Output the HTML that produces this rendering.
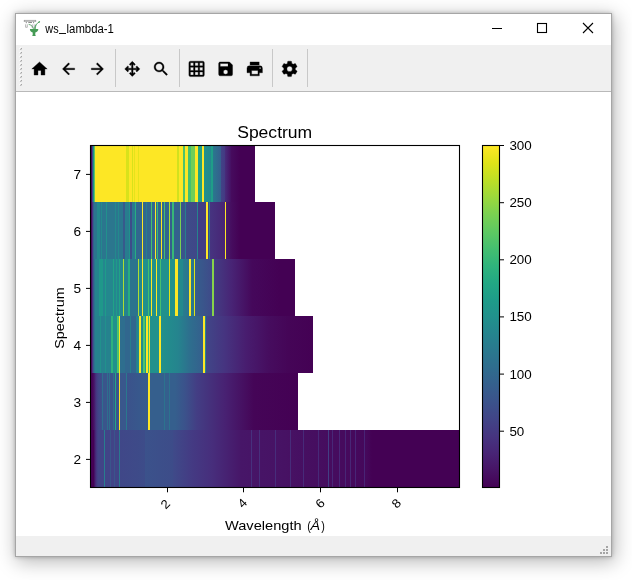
<!DOCTYPE html>
<html><head><meta charset="utf-8"><title>ws_lambda-1</title>
<style>
html,body{margin:0;padding:0;background:#fff;}
body{width:632px;height:580px;position:relative;overflow:hidden;font-family:"Liberation Sans",sans-serif;}
.win{position:absolute;left:15px;top:13px;width:597px;height:544px;box-sizing:border-box;border:1px solid #a6a6a6;background:#fff;
 box-shadow:0 0 4px rgba(0,0,0,.25),2px 4px 18px 1px rgba(0,0,0,.28);}
.tb{position:absolute;left:16px;top:14px;width:595px;height:31px;background:#fff;}
.tool{position:absolute;left:16px;top:45px;width:595px;height:46px;background:#f0f0f0;border-bottom:1px solid #b9b9b9;}
.canvas{position:absolute;left:16px;top:92px;width:595px;height:444px;background:#fff;}
.status{position:absolute;left:16px;top:536px;width:595px;height:20px;background:#f0f0f0;}
.hr{position:absolute;left:74.0px;width:370.0px;height:57.0px;background-repeat:no-repeat;}
.cb{position:absolute;left:466.5px;top:53.5px;width:17px;height:342px;background:linear-gradient(180deg,#fde725 0.0%,#dfe318 5.0%,#bddf26 10.0%,#9bd93c 15.0%,#7ad151 20.0%,#5ec962 25.0%,#44bf70 30.0%,#2fb47c 35.0%,#22a884 40.0%,#1e9c89 45.0%,#21918c 50.0%,#25848e 55.0%,#2a788e 60.0%,#2f6c8e 65.0%,#355f8d 70.0%,#3b528b 75.0%,#414487 80.0%,#463480 85.0%,#482475 90.0%,#471365 95.0%,#440154 100.0%);}
svg{position:absolute;left:0;top:0;will-change:transform;}
svg text{font-family:"Liberation Sans",sans-serif;fill:#000;}
</style></head><body>
<div class="win"></div>
<div class="tb"></div>
<div class="tool"></div>
<div class="canvas">
<div class="hr" style="top:53.0px;background:linear-gradient(90deg,#440154 0.5px,#460c5e 1.5px,#3b528b 2.5px,#21918c 3.5px,#5ec962 4.5px,#fde725 5.2px,#fde725 5.2px,#fde725 36.0px,#d8e21b 36.0px,#d8e21b 39.5px,#fde725 39.5px,#fde725 42.0px,#d8e21b 42.0px,#d8e21b 43.0px,#fde725 43.0px,#fde725 44.0px,#e5e41b 44.0px,#e5e41b 44.8px,#fde725 44.8px,#fde725 48.3px,#e5e41b 48.3px,#e5e41b 49.1px,#fde725 49.1px,#fde725 87.0px,#d1e11e 87.0px,#d1e11e 88.6px,#fde725 88.6px,#fde725 92.9px,#4ec36a 92.9px,#4ec36a 94.9px,#fde725 94.9px,#fde725 98.0px,#44bf70 98.0px,#44bf70 100.8px,#6fce58 100.8px,#6fce58 104.8px,#fde725 104.8px,#fde725 108.0px,#22a884 108.0px,#1f9e88 111.9px,#fde725 111.9px,#fde725 113.9px,#21918c 113.9px,#23898d 121.0px,#1f9e88 121.0px,#1f9e88 123.0px,#2a788e 123.0px,#355f8d 130.9px,#414487 130.9px,#443a83 134.8px,#472e7c 134.8px,#460f62 141.0px,#460c5e 141.0px,#440154 150.0px,#440154 150.0px,#440154 165.5px,#fff 165.5px)"></div>
<div class="hr" style="top:110.0px;background:linear-gradient(90deg,#440154 0.5px,#460c5e 1.5px,#463480 2.5px,#355f8d 3.5px,#2c738e 4.5px,#2b768e 4.5px,#2b768e 7.5px,#23898d 7.5px,#23898d 10.0px,#2b768e 10.0px,#2b768e 11.0px,#23898d 11.0px,#23898d 12.0px,#2b768e 12.0px,#2b768e 16.0px,#21918c 16.0px,#21918c 17.0px,#2b768e 17.0px,#2b768e 25.3px,#23898d 25.3px,#23898d 26.2px,#2b768e 26.2px,#2b768e 28.3px,#23898d 28.3px,#23898d 29.5px,#2b768e 29.5px,#2b768e 33.0px,#375a8c 33.0px,#375a8c 34.8px,#287d8e 34.8px,#287d8e 39.0px,#21918c 39.0px,#21918c 39.6px,#3d4c89 39.6px,#3d4c89 42.0px,#2a788e 42.0px,#2a788e 45.3px,#27ad81 45.3px,#27ad81 46.1px,#31678e 46.1px,#31678e 52.0px,#fde725 52.0px,#fde725 53.0px,#31678e 53.0px,#31678e 56.0px,#287d8e 56.0px,#287d8e 57.0px,#31678e 57.0px,#31678e 61.1px,#44bf70 61.1px,#44bf70 62.1px,#31678e 62.1px,#31678e 65.2px,#fde725 65.2px,#fde725 66.2px,#2f6c8e 66.2px,#2f6c8e 67.0px,#37b877 67.0px,#37b877 68.0px,#31678e 68.0px,#31678e 70.7px,#fde725 70.7px,#fde725 71.7px,#31678e 71.7px,#31678e 73.7px,#44bf70 73.7px,#44bf70 75.2px,#31678e 75.2px,#31678e 79.0px,#afdd2f 79.0px,#afdd2f 80.0px,#355f8d 80.0px,#355f8d 82.0px,#37b877 82.0px,#37b877 84.0px,#34628d 84.0px,#34628d 90.0px,#7ad151 90.0px,#7ad151 91.0px,#3a558b 91.0px,#3a558b 94.7px,#287d8e 94.7px,#287d8e 96.0px,#3d4c89 96.0px,#404788 106.7px,#25848e 106.7px,#25848e 107.9px,#433e84 107.9px,#433e84 115.8px,#fde725 115.8px,#fde725 118.0px,#414487 118.0px,#414487 119.0px,#287d8e 119.0px,#287d8e 120.2px,#463480 120.2px,#482475 134.8px,#fde725 134.8px,#fde725 136.2px,#471a6b 136.2px,#460c5e 142.0px,#460c5e 142.0px,#440154 150.0px,#440154 150.0px,#440154 185.0px,#fff 185.0px)"></div>
<div class="hr" style="top:167.0px;background:linear-gradient(90deg,#440154 0.5px,#460c5e 1.5px,#463480 2.5px,#375a8c 3.5px,#2c738e 4.5px,#277f8e 5.5px,#25848e 5.5px,#25848e 9.5px,#1f988a 9.5px,#1f988a 12.7px,#24878e 12.7px,#24878e 15.0px,#1e9c89 15.0px,#1e9c89 16.0px,#24878e 16.0px,#24878e 23.0px,#20a386 23.0px,#20a386 24.5px,#24878e 24.5px,#24878e 26.5px,#1f9a8a 26.5px,#1f9a8a 27.5px,#24878e 27.5px,#24878e 29.3px,#20a386 29.3px,#20a386 30.2px,#24878e 30.2px,#24878e 33.1px,#afdd2f 33.1px,#afdd2f 34.0px,#25848e 34.0px,#25848e 38.0px,#27ad81 38.0px,#27ad81 39.6px,#2c738e 39.6px,#2c738e 47.9px,#afdd2f 47.9px,#afdd2f 49.0px,#24878e 49.0px,#24878e 52.0px,#fde725 52.0px,#fde725 53.0px,#21918c 53.0px,#21918c 57.9px,#44bf70 57.9px,#44bf70 58.9px,#21918c 58.9px,#21918c 61.0px,#fde725 61.0px,#fde725 62.0px,#21918c 62.0px,#21918c 65.9px,#fde725 65.9px,#fde725 67.1px,#21918c 67.1px,#21918c 70.2px,#44bf70 70.2px,#44bf70 71.4px,#21918c 71.4px,#21918c 79.0px,#dfe318 79.0px,#dfe318 80.0px,#21918c 80.0px,#21918c 84.8px,#fde725 84.8px,#fde725 88.1px,#23898d 88.1px,#23898d 93.0px,#287d8e 93.0px,#2c738e 99.0px,#fde725 99.0px,#fde725 101.2px,#2a788e 101.2px,#2a788e 103.8px,#dfe318 103.8px,#dfe318 105.1px,#355f8d 105.1px,#3f4a89 122.0px,#87d449 122.0px,#87d449 123.7px,#433e84 123.7px,#482475 141.7px,#482475 141.7px,#45085b 162.0px,#45085b 162.0px,#440154 190.0px,#440154 190.0px,#440154 205.5px,#fff 205.5px)"></div>
<div class="hr" style="top:224.0px;background:linear-gradient(90deg,#440154 0.5px,#460c5e 1.5px,#463480 2.5px,#375a8c 3.5px,#2c738e 4.5px,#277f8e 5.5px,#26828e 5.5px,#26828e 10.0px,#21918c 10.0px,#21918c 11.5px,#26828e 11.5px,#26828e 15.0px,#21918c 15.0px,#21918c 16.0px,#26828e 16.0px,#26828e 20.6px,#21918c 20.6px,#21918c 21.4px,#2cb27e 21.4px,#2cb27e 22.8px,#21918c 22.8px,#21918c 26.9px,#4ec36a 26.9px,#4ec36a 28.6px,#fde725 28.6px,#fde725 30.0px,#2e6e8e 30.0px,#2e6e8e 35.0px,#31678e 35.0px,#31678e 39.6px,#287d8e 39.6px,#287d8e 41.0px,#31678e 41.0px,#31678e 46.0px,#287d8e 46.0px,#238c8d 49.0px,#fde725 49.0px,#fde725 50.8px,#238c8d 50.8px,#238c8d 52.8px,#4ec36a 52.8px,#4ec36a 54.7px,#1e9c89 54.7px,#1e9c89 55.9px,#fde725 55.9px,#fde725 57.9px,#44bf70 57.9px,#44bf70 58.9px,#fde725 58.9px,#fde725 60.1px,#21918c 60.1px,#21918c 68.6px,#27ad81 68.6px,#27ad81 69.0px,#fde725 69.0px,#fde725 70.7px,#21918c 70.7px,#25848e 88.0px,#25848e 88.0px,#2e6e8e 100.0px,#2e6e8e 100.0px,#355f8d 113.0px,#fde725 113.0px,#fde725 115.0px,#25848e 115.0px,#25848e 115.8px,#404788 115.8px,#463480 134.6px,#463480 134.6px,#481d6f 156.0px,#481d6f 156.0px,#460c5e 179.7px,#460c5e 179.7px,#450557 198.7px,#450557 198.7px,#440154 223.0px,#fff 223.0px)"></div>
<div class="hr" style="top:281.0px;background:linear-gradient(90deg,#440154 0.5px,#440154 2.0px,#471365 4.0px,#463480 6.0px,#414487 8.0px,#3b528b 12.4px,#2e6e8e 12.4px,#2e6e8e 13.2px,#3a558b 13.2px,#3a558b 17.2px,#2e6e8e 17.2px,#2e6e8e 18.0px,#3a558b 18.0px,#3a558b 19.2px,#2e6e8e 19.2px,#2e6e8e 20.0px,#3a558b 20.0px,#3a558b 23.3px,#2e6e8e 23.3px,#2e6e8e 24.1px,#3a558b 24.1px,#3a558b 25.0px,#22a884 25.0px,#22a884 26.1px,#3a558b 26.1px,#3a558b 28.9px,#fde725 28.9px,#fde725 30.0px,#39578c 30.0px,#39578c 36.0px,#2a788e 36.0px,#2a788e 36.8px,#3b528b 36.8px,#365c8d 57.9px,#fde725 57.9px,#fde725 60.1px,#355f8d 60.1px,#355f8d 66.7px,#2c738e 66.7px,#2c738e 67.5px,#355f8d 67.5px,#355f8d 74.2px,#2c738e 74.2px,#2c738e 75.0px,#355f8d 75.0px,#355f8d 78.9px,#2c738e 78.9px,#2c738e 79.7px,#355f8d 79.7px,#355f8d 85.0px,#355f8d 85.0px,#3b528b 95.0px,#3b528b 95.0px,#433e84 106.6px,#433e84 106.6px,#482172 135.4px,#482172 135.4px,#450557 164.0px,#450557 164.0px,#440154 208.0px,#fff 208.0px)"></div>
<div class="hr" style="top:338.0px;background:linear-gradient(90deg,#440154 0.5px,#440154 3.5px,#46317e 6.0px,#414487 8.0px,#414487 8.0px,#414487 13.9px,#287d8e 13.9px,#287d8e 15.0px,#414487 15.0px,#414487 20.0px,#3a558b 20.0px,#3a558b 21.0px,#414487 21.0px,#414487 24.0px,#3a558b 24.0px,#3a558b 25.0px,#414487 25.0px,#414487 28.9px,#2a788e 28.9px,#2a788e 30.0px,#404788 30.0px,#3d4c89 55.0px,#3b528b 55.0px,#3d4c89 83.4px,#3f4a89 83.4px,#443a83 102.4px,#443a83 102.4px,#472e7c 122.0px,#472e7c 122.0px,#471668 151.0px,#471668 151.0px,#471567 161.5px,#47307d 161.5px,#47307d 162.5px,#471567 162.5px,#471466 169.5px,#472f7c 169.5px,#472f7c 170.5px,#471466 170.5px,#471365 184.9px,#472d7b 184.9px,#472d7b 185.9px,#471365 185.9px,#471163 200.5px,#472c7a 200.5px,#472c7a 201.5px,#471163 201.5px,#460f62 213.5px,#472a79 213.5px,#472a79 214.5px,#460f61 214.5px,#460e60 228.1px,#472978 228.1px,#472978 229.1px,#460e60 229.1px,#460d5f 237.8px,#433e84 237.8px,#433e84 239.4px,#460c5f 239.4px,#460c5e 242.5px,#482777 242.5px,#482777 243.5px,#460c5e 243.5px,#460b5e 249.2px,#482777 249.2px,#482777 250.2px,#460b5e 250.2px,#460b5d 255.5px,#482676 255.5px,#482676 256.5px,#460a5d 256.5px,#460a5d 260.3px,#482676 260.3px,#482676 261.3px,#450a5c 261.3px,#45095c 265.5px,#482576 265.5px,#482576 266.5px,#45095c 266.5px,#45085b 274.5px,#482475 274.5px,#482475 275.5px,#45085b 275.5px,#45085b 276.5px,#45085b 276.5px,#440154 282.0px,#440154 282.0px,#440154 369.5px,#fff 369.5px)"></div>
<div class="cb"></div>
</div>
<div class="status"></div>
<svg width="632" height="580" viewBox="0 0 632 580">
<!-- title bar -->
<g id="appicon">
<path d="M24 20.400h12M24.300 21.300h11.400M24.300 20v2M35.700 20v2" stroke="#909090" stroke-width=".7" fill="none"/>
<path d="M28.300 22.500h3.700M26.300 21.800v1.400M33.600 21.800v1.400" stroke="#707070" stroke-width=".8" fill="none"/>
<path d="M25.600 24.300v3h1.700v-3" stroke="#9a9a9a" stroke-width=".7" fill="none"/>
<path d="M32.300 24.400v3.600M34.200 24.400v3.600" stroke="#9a8fa0" stroke-width=".7" fill="none"/>
<path d="M34.500 29.200c.2-3.200 1.700-5.800 4.900-7.300M33.500 29.200c-.3-2.300-1.700-4.100-4.500-4.800M35.300 29.200c0-2 .3-3 .8-4.400" stroke="#459b55" stroke-width=".8" fill="none" stroke-linecap="round"/>
<ellipse cx="39.100" cy="22" rx="1.100" ry=".7" transform="rotate(-30 39.100 22)" fill="#459b55"/>
<path d="M29.900 29h8.400c.1 2-1.300 3.200-3 3.400v2.800l.8.700h-4.200l.8-.7v-2.800c-1.700-.2-2.900-1.400-2.800-3.400z" fill="#459b55"/>
</g>
<text x="45.300" y="32.500" font-size="12" textLength="13.300" lengthAdjust="spacingAndGlyphs">ws</text><rect x="59" y="33" width="7" height="1" fill="#111"/><text x="66.600" y="32.500" font-size="12" textLength="47.300" lengthAdjust="spacingAndGlyphs">lambda-1</text>
<rect x="492" y="28" width="10" height="1" fill="#000"/>
<rect x="537.500" y="23.500" width="9" height="9" fill="none" stroke="#000" stroke-width="1.1"/>
<path d="M583 23l10 10M593 23l-10 10" stroke="#000" stroke-width="1.100" fill="none"/>
<!-- toolbar -->
<rect x="21" y="48" width="1" height="1" fill="#a6a6a6"/><rect x="20" y="49" width="1" height="1" fill="#bcbcbc"/><rect x="21" y="49" width="1" height="1" fill="#d6d6d6"/><rect x="20" y="48" width="1" height="1" fill="#e2e2e2"/><rect x="19" y="48" width="1" height="1" fill="#fafafa"/><rect x="20" y="47" width="1" height="1" fill="#fafafa"/><rect x="21" y="52" width="1" height="1" fill="#a6a6a6"/><rect x="20" y="53" width="1" height="1" fill="#bcbcbc"/><rect x="21" y="53" width="1" height="1" fill="#d6d6d6"/><rect x="20" y="52" width="1" height="1" fill="#e2e2e2"/><rect x="19" y="52" width="1" height="1" fill="#fafafa"/><rect x="20" y="51" width="1" height="1" fill="#fafafa"/><rect x="21" y="56" width="1" height="1" fill="#a6a6a6"/><rect x="20" y="57" width="1" height="1" fill="#bcbcbc"/><rect x="21" y="57" width="1" height="1" fill="#d6d6d6"/><rect x="20" y="56" width="1" height="1" fill="#e2e2e2"/><rect x="19" y="56" width="1" height="1" fill="#fafafa"/><rect x="20" y="55" width="1" height="1" fill="#fafafa"/><rect x="21" y="60" width="1" height="1" fill="#a6a6a6"/><rect x="20" y="61" width="1" height="1" fill="#bcbcbc"/><rect x="21" y="61" width="1" height="1" fill="#d6d6d6"/><rect x="20" y="60" width="1" height="1" fill="#e2e2e2"/><rect x="19" y="60" width="1" height="1" fill="#fafafa"/><rect x="20" y="59" width="1" height="1" fill="#fafafa"/><rect x="21" y="64" width="1" height="1" fill="#a6a6a6"/><rect x="20" y="65" width="1" height="1" fill="#bcbcbc"/><rect x="21" y="65" width="1" height="1" fill="#d6d6d6"/><rect x="20" y="64" width="1" height="1" fill="#e2e2e2"/><rect x="19" y="64" width="1" height="1" fill="#fafafa"/><rect x="20" y="63" width="1" height="1" fill="#fafafa"/><rect x="21" y="68" width="1" height="1" fill="#a6a6a6"/><rect x="20" y="69" width="1" height="1" fill="#bcbcbc"/><rect x="21" y="69" width="1" height="1" fill="#d6d6d6"/><rect x="20" y="68" width="1" height="1" fill="#e2e2e2"/><rect x="19" y="68" width="1" height="1" fill="#fafafa"/><rect x="20" y="67" width="1" height="1" fill="#fafafa"/><rect x="21" y="72" width="1" height="1" fill="#a6a6a6"/><rect x="20" y="73" width="1" height="1" fill="#bcbcbc"/><rect x="21" y="73" width="1" height="1" fill="#d6d6d6"/><rect x="20" y="72" width="1" height="1" fill="#e2e2e2"/><rect x="19" y="72" width="1" height="1" fill="#fafafa"/><rect x="20" y="71" width="1" height="1" fill="#fafafa"/><rect x="21" y="76" width="1" height="1" fill="#a6a6a6"/><rect x="20" y="77" width="1" height="1" fill="#bcbcbc"/><rect x="21" y="77" width="1" height="1" fill="#d6d6d6"/><rect x="20" y="76" width="1" height="1" fill="#e2e2e2"/><rect x="19" y="76" width="1" height="1" fill="#fafafa"/><rect x="20" y="75" width="1" height="1" fill="#fafafa"/><rect x="21" y="80" width="1" height="1" fill="#a6a6a6"/><rect x="20" y="81" width="1" height="1" fill="#bcbcbc"/><rect x="21" y="81" width="1" height="1" fill="#d6d6d6"/><rect x="20" y="80" width="1" height="1" fill="#e2e2e2"/><rect x="19" y="80" width="1" height="1" fill="#fafafa"/><rect x="20" y="79" width="1" height="1" fill="#fafafa"/><rect x="21" y="84" width="1" height="1" fill="#a6a6a6"/><rect x="20" y="85" width="1" height="1" fill="#bcbcbc"/><rect x="21" y="85" width="1" height="1" fill="#d6d6d6"/><rect x="20" y="84" width="1" height="1" fill="#e2e2e2"/><rect x="19" y="84" width="1" height="1" fill="#fafafa"/><rect x="20" y="83" width="1" height="1" fill="#fafafa"/>
<rect x="115.0" y="49" width="1" height="38" fill="#c8c8c8"/><rect x="179.0" y="49" width="1" height="38" fill="#c8c8c8"/><rect x="272.0" y="49" width="1" height="38" fill="#c8c8c8"/><rect x="307.0" y="49" width="1" height="38" fill="#c8c8c8"/>
<g fill="#000" stroke="#000" stroke-width=".45" stroke-linejoin="round">
<path transform="translate(30.25 59.65) scale(0.7708)" d="M10,20V14H14V20H19V12H22L12,3L2,12H5V20H10Z"/>
<path transform="translate(59.25 59.65) scale(0.7708)" d="M20,11V13H8L13.5,18.5L12.08,19.92L4.16,12L12.08,4.08L13.5,5.5L8,11H20Z"/>
<path transform="translate(88.25 59.65) scale(0.7708)" d="M4,11V13H16L10.5,18.5L11.92,19.92L19.84,12L11.92,4.08L10.5,5.5L16,11H4Z"/>
<path transform="translate(123.05 59.65) scale(0.7708)" d="M13,11H18L16.5,9.5L17.92,8.08L21.84,12L17.92,15.92L16.5,14.5L18,13H13V18L14.5,16.5L15.92,17.92L12,21.84L8.08,17.92L9.5,16.5L11,18V13H6L7.5,14.5L6.08,15.92L2.16,12L6.08,8.08L7.5,9.5L6,11H11V6L9.5,7.5L8.08,6.08L12,2.16L15.92,6.08L14.5,7.5L13,6V11Z"/>
<path transform="translate(151.75 59.65) scale(0.7708)" d="M9.5,3A6.5,6.5 0 0,1 16,9.5C16,11.11 15.41,12.59 14.44,13.73L14.71,14H15.5L20.5,19L19,20.5L14,15.5V14.71L13.73,14.44C12.59,15.41 11.11,16 9.5,16A6.5,6.5 0 0,1 3,9.5A6.5,6.5 0 0,1 9.5,3M9.5,5C7,5 5,7 5,9.5C5,12 7,14 9.5,14C12,14 14,12 14,9.5C14,7 12,5 9.5,5Z"/>
<path transform="translate(187.35 59.65) scale(0.7708)" d="M10,4V8H14V4H10M16,4V8H20V4H16M16,10V14H20V10H16M16,16V20H20V16H16M14,20V16H10V20H14M8,20V16H4V20H8M8,14V10H4V14H8M8,8V4H4V8H8M10,14H14V10H10V14M4,2H20A2,2 0 0,1 22,4V20A2,2 0 0,1 20,22H4C2.92,22 2,21.1 2,20V4A2,2 0 0,1 4,2Z"/>
<path transform="translate(216.35 59.65) scale(0.7708)" d="M15,9H5V5H15M12,19A3,3 0 0,1 9,16A3,3 0 0,1 12,13A3,3 0 0,1 15,16A3,3 0 0,1 12,19M17,3H5C3.89,3 3,3.9 3,5V19A2,2 0 0,0 5,21H19A2,2 0 0,0 21,19V7L17,3Z"/>
<path transform="translate(245.45 59.65) scale(0.7708)" d="M18,3H6V7H18M19,12A1,1 0 0,1 18,11A1,1 0 0,1 19,10A1,1 0 0,1 20,11A1,1 0 0,1 19,12M16,19H8V14H16M19,8H5A3,3 0 0,0 2,11V17H6V21H18V17H22V11A3,3 0 0,0 19,8Z"/>
<path transform="translate(280.35 59.65) scale(0.7708)" d="M12,15.5A3.5,3.5 0 0,1 8.5,12A3.5,3.5 0 0,1 12,8.5A3.5,3.5 0 0,1 15.5,12A3.5,3.5 0 0,1 12,15.5M19.43,12.97C19.47,12.65 19.5,12.33 19.5,12C19.5,11.67 19.47,11.34 19.43,11L21.54,9.37C21.73,9.22 21.78,8.95 21.66,8.73L19.66,5.27C19.54,5.05 19.27,4.96 19.05,5.05L16.56,6.05C16.04,5.66 15.5,5.32 14.87,5.07L14.5,2.42C14.46,2.18 14.25,2 14,2H10C9.75,2 9.54,2.18 9.5,2.42L9.13,5.07C8.5,5.32 7.96,5.66 7.44,6.05L4.95,5.05C4.73,4.96 4.46,5.05 4.34,5.27L2.34,8.73C2.21,8.95 2.27,9.22 2.46,9.37L4.57,11C4.53,11.34 4.5,11.67 4.5,12C4.5,12.33 4.53,12.65 4.57,12.97L2.46,14.63C2.27,14.78 2.21,15.05 2.34,15.27L4.34,18.73C4.46,18.95 4.73,19.03 4.95,18.95L7.44,17.94C7.96,18.34 8.5,18.68 9.13,18.93L9.5,21.58C9.54,21.82 9.75,22 10,22H14C14.25,22 14.46,21.82 14.5,21.58L14.87,18.93C15.5,18.67 16.04,18.34 16.56,17.94L19.05,18.95C19.27,19.03 19.54,18.95 19.66,18.73L21.66,15.27C21.78,15.05 21.73,14.78 21.54,14.63L19.43,12.97Z"/>
</g>
<!-- plot -->
<rect x="90.5" y="145.5" width="369" height="342" fill="none" stroke="#000" stroke-width="1.1"/>
<rect x="482.5" y="145.5" width="17" height="342" fill="none" stroke="#000" stroke-width="1.1"/>
<line x1="86" x2="90.5" y1="174.4" y2="174.4" stroke="#000"/>
<text x="81" y="178.8" text-anchor="end" font-size="12.4" textLength="7.6" lengthAdjust="spacingAndGlyphs">7</text>
<line x1="86" x2="90.5" y1="231.4" y2="231.4" stroke="#000"/>
<text x="81" y="235.8" text-anchor="end" font-size="12.4" textLength="7.6" lengthAdjust="spacingAndGlyphs">6</text>
<line x1="86" x2="90.5" y1="288.4" y2="288.4" stroke="#000"/>
<text x="81" y="292.8" text-anchor="end" font-size="12.4" textLength="7.6" lengthAdjust="spacingAndGlyphs">5</text>
<line x1="86" x2="90.5" y1="345.4" y2="345.4" stroke="#000"/>
<text x="81" y="349.8" text-anchor="end" font-size="12.4" textLength="7.6" lengthAdjust="spacingAndGlyphs">4</text>
<line x1="86" x2="90.5" y1="402.4" y2="402.4" stroke="#000"/>
<text x="81" y="406.8" text-anchor="end" font-size="12.4" textLength="7.6" lengthAdjust="spacingAndGlyphs">3</text>
<line x1="86" x2="90.5" y1="459.4" y2="459.4" stroke="#000"/>
<text x="81" y="463.8" text-anchor="end" font-size="12.4" textLength="7.6" lengthAdjust="spacingAndGlyphs">2</text>
<line x1="499.5" x2="504" y1="145.5" y2="145.5" stroke="#000"/>
<text x="509.4" y="149.9" font-size="12.4" textLength="22.4" lengthAdjust="spacingAndGlyphs">300</text>
<line x1="499.5" x2="504" y1="202.7" y2="202.7" stroke="#000"/>
<text x="509.4" y="207.1" font-size="12.4" textLength="22.4" lengthAdjust="spacingAndGlyphs">250</text>
<line x1="499.5" x2="504" y1="259.8" y2="259.8" stroke="#000"/>
<text x="509.4" y="264.2" font-size="12.4" textLength="22.4" lengthAdjust="spacingAndGlyphs">200</text>
<line x1="499.5" x2="504" y1="316.9" y2="316.9" stroke="#000"/>
<text x="509.4" y="321.3" font-size="12.4" textLength="22.4" lengthAdjust="spacingAndGlyphs">150</text>
<line x1="499.5" x2="504" y1="374.1" y2="374.1" stroke="#000"/>
<text x="509.4" y="378.5" font-size="12.4" textLength="22.4" lengthAdjust="spacingAndGlyphs">100</text>
<line x1="499.5" x2="504" y1="431.2" y2="431.2" stroke="#000"/>
<text x="509.4" y="435.6" font-size="12.4" textLength="14.9" lengthAdjust="spacingAndGlyphs">50</text>
<line y1="487.5" y2="492.3" x1="167.5" x2="167.5" stroke="#000"/>
<text transform="translate(165.3 504.1) rotate(-45)" x="0" y="4.3" text-anchor="middle" font-size="12.4" textLength="7.4" lengthAdjust="spacingAndGlyphs">2</text>
<line y1="487.5" y2="492.3" x1="243.5" x2="243.5" stroke="#000"/>
<text transform="translate(242.3 503.2) rotate(-45)" x="0" y="4.3" text-anchor="middle" font-size="12.4" textLength="7.4" lengthAdjust="spacingAndGlyphs">4</text>
<line y1="487.5" y2="492.3" x1="320.5" x2="320.5" stroke="#000"/>
<text transform="translate(320.0 503.3) rotate(-45)" x="0" y="4.3" text-anchor="middle" font-size="12.4" textLength="7.4" lengthAdjust="spacingAndGlyphs">6</text>
<line y1="487.5" y2="492.3" x1="397.5" x2="397.5" stroke="#000"/>
<text transform="translate(396.3 503.3) rotate(-45)" x="0" y="4.3" text-anchor="middle" font-size="12.4" textLength="7.4" lengthAdjust="spacingAndGlyphs">8</text>
<text x="237.2" y="137.8" font-size="16" textLength="75" lengthAdjust="spacingAndGlyphs">Spectrum</text>
<text x="225" y="529.7" font-size="12.4" textLength="76.6" lengthAdjust="spacingAndGlyphs">Wavelength</text>
<text x="307.3" y="529.7" font-size="12.4" textLength="3.6" lengthAdjust="spacingAndGlyphs">(</text>
<text x="310.6" y="529.7" font-size="12.4" font-style="italic" textLength="9.6" lengthAdjust="spacingAndGlyphs">&#197;</text>
<text x="321.2" y="529.7" font-size="12.4" textLength="3.6" lengthAdjust="spacingAndGlyphs">)</text>
<text transform="translate(64.4 348.8) rotate(-90)" x="0" y="0" font-size="12.4" textLength="61.5" lengthAdjust="spacingAndGlyphs">Spectrum</text>
<!-- size grip -->
<g fill="#a5a5a5">
<rect x="606" y="546" width="2" height="2"/>
<rect x="603" y="549" width="2" height="2"/><rect x="606" y="549" width="2" height="2"/>
<rect x="600" y="552" width="2" height="2"/><rect x="603" y="552" width="2" height="2"/><rect x="606" y="552" width="2" height="2"/>
</g>
</svg>
</body></html>
